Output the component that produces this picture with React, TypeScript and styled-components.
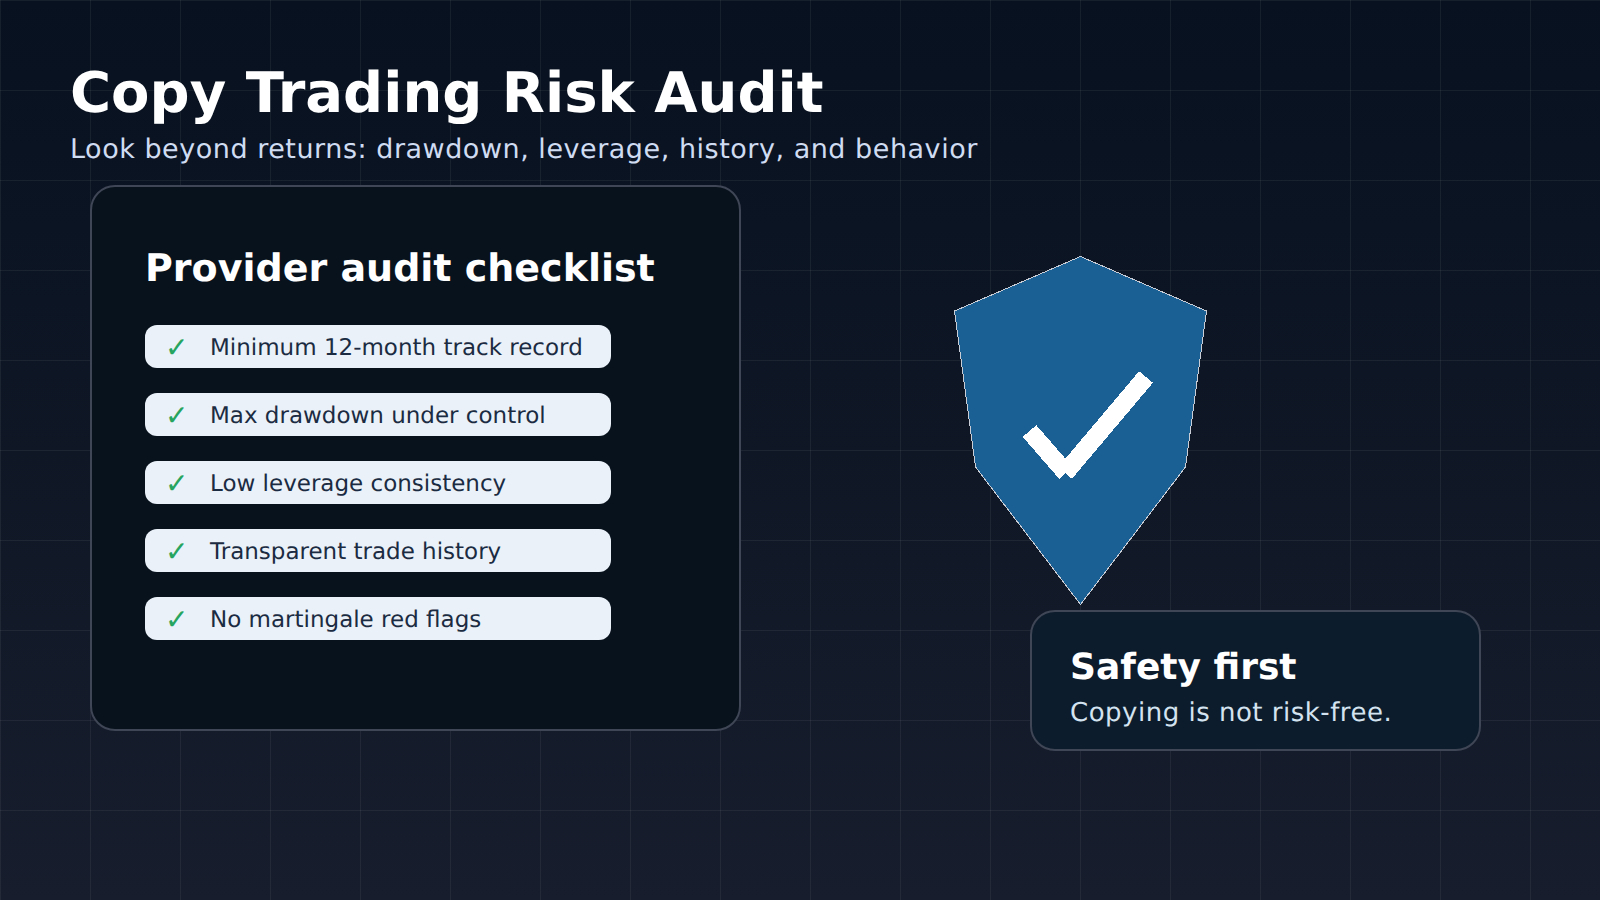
import React from 'react';

import styled, { createGlobalStyle } from 'styled-components';

const GlobalStyle = createGlobalStyle`
  html,
  body {
    margin: 0;
    padding: 0;
    background: #161c2b;
  }

  * {
    box-sizing: border-box;
  }
`;

const Page = styled.div`
  width: 1600px;
  height: 900px;
  overflow: hidden;
  padding-top: 62px;
  font-family: 'DejaVu Sans', 'Liberation Sans', sans-serif;
  text-rendering: geometricPrecision;
  background-color: #111827;
  background-image:
    linear-gradient(rgba(255, 255, 255, 0.06) 1px, transparent 1px),
    linear-gradient(90deg, rgba(255, 255, 255, 0.06) 1px, transparent 1px),
    linear-gradient(180deg, #07111f 0%, #171d2c 100%);
  background-size: 90px 90px, 90px 90px, 100% 100%;
`;

const Header = styled.header`
  padding-left: 70px;
`;

const Title = styled.h1`
  margin: 0;
  font-size: 56px;
  line-height: 64px;
  font-weight: 700;
  color: #ffffff;
`;

const Subtitle = styled.p`
  margin: 7px 0 0;
  font-size: 27px;
  line-height: 34px;
  letter-spacing: 0.525px;
  color: #cfdcf2;
`;

const Content = styled.main`
  display: flex;
  align-items: flex-start;
  margin-top: 18px;
  padding-left: 90px;
`;

const ChecklistCard = styled.section`
  width: 651px;
  height: 546px;
  padding: 58px 0 0 53px;
  border: 2px solid #3f4655;
  border-radius: 25px;
  background: #08121d;
`;

const ChecklistTitle = styled.h2`
  margin: 0 0 34px;
  font-size: 38px;
  line-height: 46px;
  font-weight: 700;
  color: #ffffff;
`;

const ChecklistItems = styled.ul`
  display: flex;
  flex-direction: column;
  gap: 25px;
  margin: 0;
  padding: 0;
  list-style: none;
`;

const ChecklistItem = styled.li`
  display: flex;
  align-items: center;
  width: 466px;
  height: 43px;
  padding: 3px 0 0 20px;
  border-radius: 12px;
  background: #eaf1f8;
  font-size: 23px;
  line-height: 40px;
  color: #1b2b42;
`;

const CheckMark = styled.span`
  width: 45px;
  flex: none;
  font-size: 28px;
  color: #27a560;
`;

const SafetyColumn = styled.aside`
  margin: 67px 0 0 209px;
`;

const Shield = styled.svg`
  display: block;
`;

const SafetyNote = styled.div`
  width: 451px;
  height: 141px;
  margin: 2px 0 0 80px;
  padding: 35px 0 0 38px;
  border: 2px solid #3f4655;
  border-radius: 25px;
  background: #0d1c2c;
`;

const SafetyTitle = styled.h3`
  margin: 0;
  font-size: 36px;
  line-height: 42px;
  font-weight: 700;
  color: #ffffff;
`;

const SafetyText = styled.p`
  margin: 8px 0 0;
  font-size: 26px;
  line-height: 32px;
  letter-spacing: 0.5px;
  color: #d4e3f0;
`;

const checklist = [
  'Minimum 12-month track record',
  'Max drawdown under control',
  'Low leverage consistency',
  'Transparent trade history',
  'No martingale red flags',
];

function ShieldIcon() {
  return (
    <Shield width={260} height={356} viewBox="950 252 260 356" shapeRendering="crispEdges">
      <polygon
        points="1080.5,256.5 1206.5,311 1185.5,467 1080.5,604.5 975.5,467 954.5,311"
        fill="#1b6094"
        stroke="#c9ced6"
        strokeWidth={1}
      />
      <line x1={1029.5} y1={431} x2={1066} y2={473} stroke="#ffffff" strokeWidth={18} />
      <line x1={1065} y1={473} x2={1146} y2={377} stroke="#ffffff" strokeWidth={18} />
    </Shield>
  );
}

export default function App() {
  return (
    <>
      <GlobalStyle />
      <Page>
        <Header>
          <Title>Copy Trading Risk Audit</Title>
          <Subtitle>Look beyond returns: drawdown, leverage, history, and behavior</Subtitle>
        </Header>
        <Content>
          <ChecklistCard>
            <ChecklistTitle>Provider audit checklist</ChecklistTitle>
            <ChecklistItems>
              {checklist.map(item => (
                <ChecklistItem key={item}>
                  <CheckMark>✓</CheckMark>
                  {item}
                </ChecklistItem>
              ))}
            </ChecklistItems>
          </ChecklistCard>
          <SafetyColumn>
            <ShieldIcon />
            <SafetyNote>
              <SafetyTitle>Safety first</SafetyTitle>
              <SafetyText>Copying is not risk-free.</SafetyText>
            </SafetyNote>
          </SafetyColumn>
        </Content>
      </Page>
    </>
  );
}
